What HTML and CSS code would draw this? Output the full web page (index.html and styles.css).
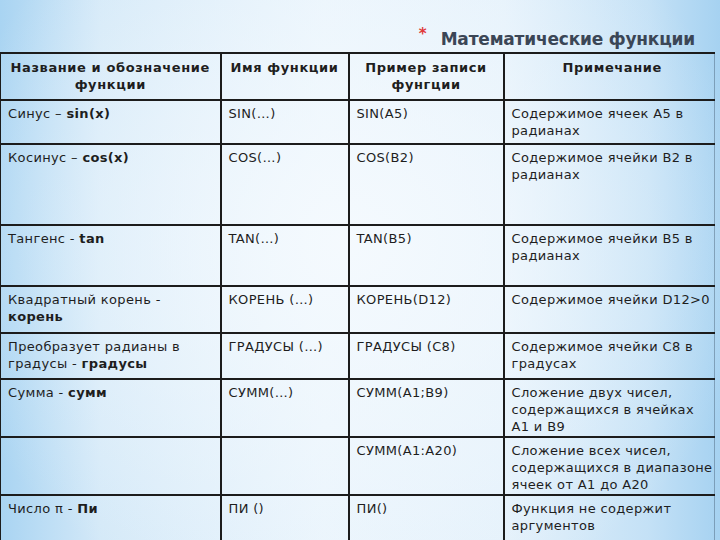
FILE: index.html
```html
<!DOCTYPE html>
<html lang="ru">
<head>
<meta charset="utf-8">
<link rel="stylesheet" href="styles.css">
</head>
<body>
<div class="slide">
  <header class="title-bar">
    <span class="star">*</span>
    <h1 class="title">Математические функции</h1>
  </header>
  <table class="funcs">
    <colgroup>
      <col class="c1"><col class="c2"><col class="c3"><col class="c4">
    </colgroup>
    <tr class="r-head">
      <th>Название и обозначение функции</th>
      <th>Имя функции</th>
      <th>Пример записи фунгции</th>
      <th>Примечание</th>
    </tr>
    <tr class="r1">
      <td>Синус – <b>sin(x)</b></td>
      <td>SIN(…)</td>
      <td>SIN(A5)</td>
      <td>Содержимое ячеек A5 в радианах</td>
    </tr>
    <tr class="r2">
      <td>Косинус – <b>cos(x)</b></td>
      <td>COS(…)</td>
      <td>COS(B2)</td>
      <td>Содержимое ячейки B2 в радианах</td>
    </tr>
    <tr class="r3">
      <td>Тангенс - <b>tan</b></td>
      <td>TAN(…)</td>
      <td>TAN(B5)</td>
      <td>Содержимое ячейки B5 в радианах</td>
    </tr>
    <tr class="r4">
      <td>Квадратный корень - <b>корень</b></td>
      <td>КОРЕНЬ (…)</td>
      <td>КОРЕНЬ(D12)</td>
      <td>Содержимое ячейки D12&gt;0</td>
    </tr>
    <tr class="r5">
      <td>Преобразует радианы в градусы - <b>градусы</b></td>
      <td>ГРАДУСЫ (…)</td>
      <td>ГРАДУСЫ (C8)</td>
      <td>Содержимое ячейки C8 в градусах</td>
    </tr>
    <tr class="r6">
      <td>Сумма - <b>сумм</b></td>
      <td>СУММ(…)</td>
      <td>СУММ(A1;B9)</td>
      <td>Сложение двух чисел, содержащихся в ячейках A1 и B9</td>
    </tr>
    <tr class="r7">
      <td></td>
      <td></td>
      <td>СУММ(A1:A20)</td>
      <td>Сложение всех чисел, содержащихся в диапазоне ячеек от A1 до A20</td>
    </tr>
    <tr class="r8">
      <td>Число π - <b>Пи</b></td>
      <td>ПИ ()</td>
      <td>ПИ()</td>
      <td>Функция не содержит аргументов</td>
    </tr>
  </table>
</div>
</body>
</html>
```

FILE: styles.css
```css
html, body {
  margin: 0;
  padding: 0;
}
body {
  width: 720px;
  height: 540px;
  overflow: hidden;
  font-family: "DejaVu Sans", Verdana, sans-serif;
  color: #1e1e1e;
}
.slide {
  width: 720px;
  height: 540px;
  background:
    radial-gradient(ellipse 420px 380px at 48% 45%, rgba(245,250,254,0.95), rgba(245,250,254,0) 100%),
    linear-gradient(90deg, #a9d4f2 0%, #d4e9f8 14%, #e9f4fc 45%, #e4f1fb 70%, #c4e1f6 90%, #a6d2f1 100%);
  overflow: hidden;
}
.title-bar {
  height: 52px;
  display: flex;
  align-items: flex-end;
  justify-content: flex-end;
  padding-right: 25px;
  box-sizing: border-box;
}
.star {
  color: #e03a3a;
  font-size: 15px;
  font-weight: bold;
  align-self: flex-start;
  margin-top: 25px;
  margin-right: 14px;
  font-family: "DejaVu Sans", sans-serif;
}
.title {
  margin: 0 0 1px 0;
  font-family: "DejaVu Sans", sans-serif;
  font-weight: bold;
  font-size: 17px;
  letter-spacing: -0.2px;
  color: #3b4656;
  line-height: 24px;
}
.funcs {
  border-collapse: collapse;
  table-layout: fixed;
  width: 714px;
  font-size: 13px;
  line-height: 17px;
  letter-spacing: 0.35px;
}
.c1 { width: 220px; }
.c2 { width: 128px; }
.c3 { width: 155px; }
.c4 { width: 211px; }
.funcs th, .funcs td {
  border: 2px solid #1c1c1c;
  vertical-align: top;
  text-align: left;
  padding: 4px 7px 0 7px;
}
.funcs tr > :first-child { border-left-width: 1px; }
.funcs tr > :last-child {
  border-right: 1px solid rgba(40,60,80,0.35);
  padding-right: 1px;
}
.funcs th {
  text-align: center;
  font-weight: bold;
  padding-top: 5px;
  letter-spacing: 0.6px;
}
.funcs b { font-weight: bold; }
.r-head { height: 47px; }
.r1 { height: 44px; }
.r2 { height: 81px; }
.r3 { height: 61px; }
.r4 { height: 47px; }
.r5 { height: 46px; }
.r6 { height: 58px; }
.r7 { height: 58px; }
.r8 { height: 60px; }
```
